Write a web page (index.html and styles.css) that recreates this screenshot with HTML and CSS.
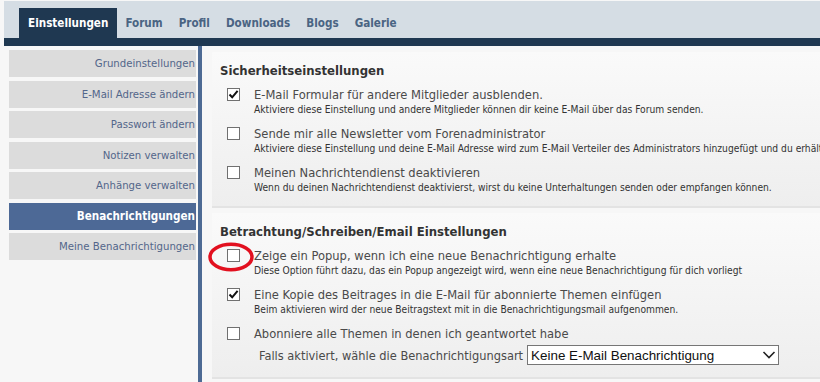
FILE: index.html
```html
<!DOCTYPE html>
<html lang="de">
<head>
    <meta charset="UTF-8">
    <title>Einstellungen - Benachrichtigungen</title>
    <link rel="stylesheet" href="styles.css">
</head>
<body>
    <!-- Top navigation -->
    <header class="topbar">
        <nav class="tabs">
            <a class="tab active">Einstellungen</a>
            <a class="tab">Forum</a>
            <a class="tab">Profil</a>
            <a class="tab">Downloads</a>
            <a class="tab">Blogs</a>
            <a class="tab">Galerie</a>
        </nav>
    </header>

    <div class="main">
        <!-- Sidebar menu -->
        <aside class="sidebar">
            <a class="side-item">Grundeinstellungen</a>
            <a class="side-item">E-Mail Adresse ändern</a>
            <a class="side-item">Passwort ändern</a>
            <a class="side-item">Notizen verwalten</a>
            <a class="side-item">Anhänge verwalten</a>
            <a class="side-item active">Benachrichtigungen</a>
            <a class="side-item">Meine Benachrichtigungen</a>
        </aside>

        <!-- Settings -->
        <div class="content">
            <section class="panel">
                <h2>Sicherheitseinstellungen</h2>
                <div class="option">
                    <span class="box"><svg width="11" height="11" viewBox="0 0 11 11"><path d="M1.5 5.5 L4.2 8.3 L9.6 1.8" fill="none" stroke="#111" stroke-width="2"/></svg></span>
                    <div class="option-text">
                        <div class="option-label">E-Mail Formular für andere Mitglieder ausblenden.</div>
                        <div class="option-desc">Aktiviere diese Einstellung und andere Mitglieder können dir keine E-Mail über das Forum senden.</div>
                    </div>
                </div>
                <div class="option">
                    <span class="box"></span>
                    <div class="option-text">
                        <div class="option-label">Sende mir alle Newsletter vom Forenadministrator</div>
                        <div class="option-desc">Aktiviere diese Einstellung und deine E-Mail Adresse wird zum E-Mail Verteiler des Administrators hinzugefügt und du erhältst alle Newsletter.</div>
                    </div>
                </div>
                <div class="option">
                    <span class="box"></span>
                    <div class="option-text">
                        <div class="option-label">Meinen Nachrichtendienst deaktivieren</div>
                        <div class="option-desc">Wenn du deinen Nachrichtendienst deaktivierst, wirst du keine Unterhaltungen senden oder empfangen können.</div>
                    </div>
                </div>
            </section>

            <section class="panel">
                <h2>Betrachtung/Schreiben/Email Einstellungen</h2>
                <div class="option">
                    <span class="box"></span>
                    <div class="option-text">
                        <div class="option-label">Zeige ein Popup, wenn ich eine neue Benachrichtigung erhalte</div>
                        <div class="option-desc">Diese Option führt dazu, das ein Popup angezeigt wird, wenn eine neue Benachrichtigung für dich vorliegt</div>
                    </div>
                    <!-- red annotation ring -->
                    <svg class="ring" width="54" height="36" viewBox="0 0 54 36">
                        <ellipse cx="26" cy="17" rx="21" ry="12.8" fill="none" stroke="#e2101f" stroke-width="3.5"/>
                    </svg>
                </div>
                <div class="option">
                    <span class="box"><svg width="11" height="11" viewBox="0 0 11 11"><path d="M1.5 5.5 L4.2 8.3 L9.6 1.8" fill="none" stroke="#111" stroke-width="2"/></svg></span>
                    <div class="option-text">
                        <div class="option-label">Eine Kopie des Beitrages in die E-Mail für abonnierte Themen einfügen</div>
                        <div class="option-desc">Beim aktivieren wird der neue Beitragstext mit in die Benachrichtigungsmail aufgenommen.</div>
                    </div>
                </div>
                <div class="option">
                    <span class="box"></span>
                    <div class="option-text">
                        <div class="option-label">Abonniere alle Themen in denen ich geantwortet habe</div>
                        <div class="sub-row">
                            Falls aktiviert, wähle die Benachrichtigungsart
                            <div class="select">
                                <span>Keine E-Mail Benachrichtigung</span>
                                <svg width="14" height="10" viewBox="0 0 14 10"><path d="M1.5 2 L7 7.5 L12.5 2" fill="none" stroke="#222" stroke-width="1.6"/></svg>
                            </div>
                        </div>
                    </div>
                </div>
            </section>
        </div>
    </div>
</body>
</html>
```

FILE: styles.css
```css
/* Reset */
* {
    margin: 0;
    padding: 0;
    box-sizing: border-box;
}

body {
    font-family: "DejaVu Sans Condensed", "DejaVu Sans", sans-serif;
    background-color: #f7f7f7;
    color: #444;
    overflow: hidden;
    height: 382px;
}

/* Top navigation */
.topbar {
    margin: 1px 0 0 4px;
    background-color: #d5dde4;
    border-bottom: 8px solid #1f3851;
    padding: 7px 0 0 15px;
}

.tabs {
    display: flex;
}

.tab {
    display: block;
    height: 30px;
    line-height: 31px;
    padding: 0 8px;
    font-size: 11.6px;
    font-weight: bold;
    color: #4a6483;
}

.tab.active {
    background-color: #1f3851;
    color: #fff;
    padding: 0 9px;
}

/* Main area */
.main {
    display: flex;
    padding-left: 9px;
}

.sidebar {
    flex: 0 0 193px;
    padding: 4px 2px 0 0;
    border-right: 4px solid #4d6a94;
    height: 340px;
}

.side-item {
    display: block;
    height: 27px;
    line-height: 27px;
    margin-bottom: 3.5px;
    padding-right: 1px;
    text-align: right;
    background-color: #dcdcdc;
    color: #53668a;
    font-size: 11.3px;
}

.side-item.active {
    background-color: #4d6996;
    color: #fff;
    font-weight: bold;
    font-size: 11.6px;
}

/* Content */
.content {
    flex: 1;
    padding: 6px 0 0 10px;
    white-space: nowrap;
}

.panel {
    background: linear-gradient(#fafafa, #eeeeee);
    border-bottom: 2px solid #e3e3e3;
    padding: 10px 0 3px 8px;
    margin-bottom: 5px;
    width: 640px;
}

.panel h2 {
    font-size: 13px;
    font-weight: bold;
    color: #333;
    line-height: 18px;
    margin-bottom: 6px;
}

.option {
    display: flex;
    align-items: flex-start;
    position: relative;
    padding-left: 7px;
    margin-bottom: 9px;
}

/* plain checkbox look */
.box {
    display: flex;
    align-items: center;
    justify-content: center;
    width: 13px;
    height: 13px;
    margin: 2px 14px 0 0;
    flex: none;
    border: 1px solid #707070;
    background-color: #fff;
}

.option-label {
    font-size: 12.8px;
    line-height: 17px;
    color: #4a4a4a;
}

.option-desc {
    font-size: 10.2px;
    line-height: 13px;
    color: #333;
}

.sub-row {
    display: flex;
    align-items: center;
    margin-top: 3px;
    padding-left: 5px;
    font-size: 12.7px;
    color: #4a4a4a;
}

.select {
    display: flex;
    align-items: center;
    justify-content: space-between;
    width: 252px;
    height: 20px;
    margin-left: 4px;
    padding: 0 2px 0 3px;
    border: 1px solid #767676;
    background-color: #fff;
    font-family: "Liberation Sans", Arial, sans-serif;
    font-size: 13.4px;
    color: #111;
}

/* red annotation circle */
.ring {
    position: absolute;
    left: -15px;
    top: -7px;
}
```
